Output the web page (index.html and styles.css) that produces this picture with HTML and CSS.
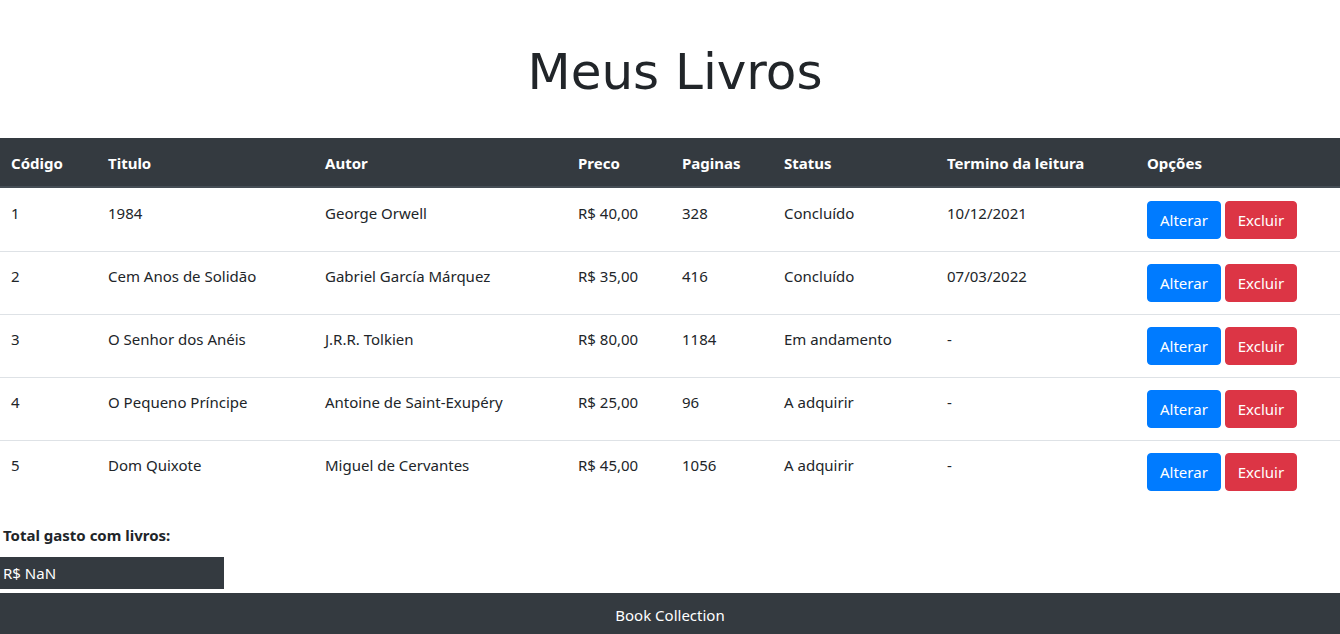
FILE: index.html
```html
<!DOCTYPE html>
<html lang="pt-BR">
<head>
<meta charset="utf-8">
<title>Meus Livros</title>
<link rel="stylesheet" href="styles.css">
</head>
<body>
<header class="page-header">
  <h1 class="title">Meus Livros</h1>
</header>
<table class="books">
  <colgroup>
    <col class="c1"><col class="c2"><col class="c3"><col class="c4"><col class="c5"><col class="c6"><col class="c7"><col class="c8">
  </colgroup>
  <thead>
    <tr>
      <th>Código</th><th>Titulo</th><th>Autor</th><th>Preco</th><th>Paginas</th><th>Status</th><th>Termino da leitura</th><th>Opções</th>
    </tr>
  </thead>
  <tbody>
    <tr>
      <td>1</td><td>1984</td><td>George Orwell</td><td>R$ 40,00</td><td>328</td><td>Concluído</td><td>10/12/2021</td>
      <td><button class="btn btn-blue">Alterar</button> <button class="btn btn-red">Excluir</button></td>
    </tr>
    <tr>
      <td>2</td><td>Cem Anos de Solidão</td><td>Gabriel García Márquez</td><td>R$ 35,00</td><td>416</td><td>Concluído</td><td>07/03/2022</td>
      <td><button class="btn btn-blue">Alterar</button> <button class="btn btn-red">Excluir</button></td>
    </tr>
    <tr>
      <td>3</td><td>O Senhor dos Anéis</td><td>J.R.R. Tolkien</td><td>R$ 80,00</td><td>1184</td><td>Em andamento</td><td>-</td>
      <td><button class="btn btn-blue">Alterar</button> <button class="btn btn-red">Excluir</button></td>
    </tr>
    <tr>
      <td>4</td><td>O Pequeno Príncipe</td><td>Antoine de Saint-Exupéry</td><td>R$ 25,00</td><td>96</td><td>A adquirir</td><td>-</td>
      <td><button class="btn btn-blue">Alterar</button> <button class="btn btn-red">Excluir</button></td>
    </tr>
    <tr>
      <td>5</td><td>Dom Quixote</td><td>Miguel de Cervantes</td><td>R$ 45,00</td><td>1056</td><td>A adquirir</td><td>-</td>
      <td><button class="btn btn-blue">Alterar</button> <button class="btn btn-red">Excluir</button></td>
    </tr>
  </tbody>
</table>
<section class="total">
  <p class="total-label">Total gasto com livros:</p>
  <div class="total-value">R$ NaN</div>
</section>
<footer class="footer">Book Collection</footer>
</body>
</html>
```
FILE: styles.css
```css
* { box-sizing: border-box; }
html, body { margin: 0; padding: 0; }
body {
  font-family: "Noto Sans", "Open Sans", sans-serif;
  font-size: 15px;
  line-height: 24px;
  color: #212529;
  background: #fff;
}
.page-header {
  height: 138px;
  display: flex;
  align-items: center;
  justify-content: center;
  padding: 6px 0 0 10px;
}
.title {
  margin: 0;
  font-family: "DejaVu Sans", Verdana, sans-serif;
  font-weight: 400;
  font-size: 50px;
  line-height: 60px;
  color: #212529;
}
.books {
  width: 100%;
  border-collapse: collapse;
  table-layout: fixed;
}
.c1 { width: 96px; }
.c2 { width: 217px; }
.c3 { width: 253px; }
.c4 { width: 104px; }
.c5 { width: 102px; }
.c6 { width: 163px; }
.c7 { width: 200px; }
.c8 { width: 205px; }
.books th {
  background: #343a40;
  color: #fff;
  font-weight: 700;
  text-align: left;
  padding: 13px 11px 11px 12px;
  border-bottom: 2px solid #454d55;
  white-space: nowrap;
}
.books th:first-child { padding-left: 11px; }
.books td {
  padding: 12px 11px 12px 12px;
  vertical-align: top;
  border-top: 1px solid #dee2e6;
  white-space: nowrap;
}
.books td:first-child { padding-left: 11px; }
.books tbody tr:first-child td { border-top: 0; padding-top: 13px; }
.btn {
  display: inline-block;
  font-family: inherit;
  font-size: 15px;
  line-height: 24px;
  padding: 6px 12px;
  border: 1px solid transparent;
  border-radius: 4px;
  color: #fff;
  cursor: pointer;
  vertical-align: top;
}
.btn-blue { background: #007bff; border-color: #007bff; }
.btn-red { background: #dc3545; border-color: #dc3545; }
.total {
  padding-top: 20px;
}
.total-label {
  margin: 0 0 10px 3px;
  font-weight: 700;
}
.total-value {
  width: 224px;
  height: 32px;
  background: #343a40;
  color: #fff;
  padding: 4px 3px;
  line-height: 24px;
}
.footer {
  margin-top: 4px;
  height: 41px;
  background: #343a40;
  color: #fff;
  display: flex;
  align-items: center;
  justify-content: center;
  padding-top: 2px;
}
```
